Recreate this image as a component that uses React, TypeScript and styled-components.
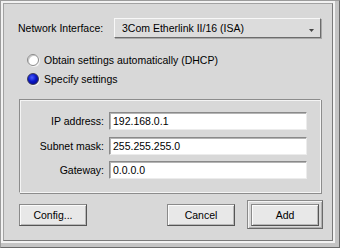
import { styled, createGlobalStyle } from "styled-components";

const Global = createGlobalStyle`
  html, body {
    margin: 0;
    padding: 0;
    background: #d8d8d8;
  }
  * {
    box-sizing: border-box;
  }
`;

const Window = styled.div`
  width: 340px;
  height: 248px;
  border: 1px solid;
  border-color: #9c9c9c #6a6a6a #6a6a6a #9c9c9c;
  background: #f2f2f2;
  padding: 2px 6px 6px 2px;
  box-shadow: inset -4px -4px 0 #c4c4c4, inset -5px -5px 0 #f2f2f2;
  font-family: "Liberation Sans", Arial, sans-serif;
  font-size: 10.5px;
  color: #000;
`;

const Panel = styled.div`
  width: 100%;
  height: 100%;
  border: 1px solid;
  border-color: #a2a2a2 #7a7a7a #7a7a7a #a2a2a2;
  background: #d8d8d8;
  padding: 14px 0 0 14px;
  display: flex;
  flex-direction: column;
`;

const InterfaceRow = styled.div`
  display: flex;
  align-items: center;
  height: 20px;
`;

const InterfaceLabel = styled.span`
  width: 96px;
`;

const Dropdown = styled.div`
  width: 207px;
  height: 20px;
  display: flex;
  align-items: center;
  justify-content: space-between;
  padding: 0 6px 0 7px;
  background: #dcdcdc;
  border: 1px solid;
  border-color: #f8f8f8 #6c6c6c #6c6c6c #f8f8f8;
  box-shadow: 1px 1px 0 #a8a8a8;
`;

const Arrow = styled.svg`
  width: 5px;
  height: 3px;
  margin-top: 4px;
`;

const Radios = styled.div`
  display: flex;
  flex-direction: column;
  margin: 12px 0 0 9px;
`;

const RadioRow = styled.label`
  display: flex;
  align-items: center;
  height: 19px;
  gap: 5px;
`;

const RadioDot = styled.span<{ $on?: boolean }>`
  width: 12px;
  height: 12px;
  border-radius: 50%;
  border: 1px solid ${(p) => (p.$on ? "#3a3a5a" : "#8a8a8a")};
  background: ${(p) =>
    p.$on
      ? "radial-gradient(circle at 40% 35%, #4a5cff 0%, #0a18c8 45%, #00007a 100%)"
      : "#ffffff"};
  box-shadow: ${(p) =>
    p.$on ? "1px 1px 0 #f4f4f4" : "inset 1px 1px 0 #c8c8c8, 1px 1px 0 #f4f4f4"};
`;

const GroupBox = styled.div`
  width: 302px;
  height: 94px;
  margin: 11px 0 0 1px;
  border: 1px solid;
  border-color: #8c8c8c #f4f4f4 #f4f4f4 #8c8c8c;
  box-shadow: inset 1px 1px 0 #f4f4f4, 1px 1px 0 #8c8c8c;
  padding: 12px 0 0 0;
  display: flex;
  flex-direction: column;
  gap: 6.5px;
`;

const FieldRow = styled.div`
  display: flex;
  align-items: center;
  gap: 5px;
  height: 18px;
`;

const FieldLabel = styled.span`
  width: 84px;
  text-align: right;
`;

const Field = styled.div`
  width: 198px;
  height: 18px;
  background: #fff;
  border: 1px solid;
  border-color: #8a8a8a #ececec #ececec #8a8a8a;
  box-shadow: inset 1px 1px 0 #b4b4b4;
  padding: 0 3px;
  display: flex;
  align-items: center;
`;

const ButtonRow = styled.div`
  display: flex;
  align-items: center;
  height: 29px;
  margin: 7px 0 0 1px;
`;

const Button = styled.div<{ $gap?: number }>`
  width: 68px;
  height: 22px;
  margin-left: ${(p) => p.$gap ?? 0}px;
  display: flex;
  align-items: center;
  justify-content: center;
  background: #e8e8e8;
  border: 1px solid;
  border-color: #8a8a8a #555 #555 #8a8a8a;
  box-shadow: inset 1px 1px 0 #fbfbfb, inset -1px -1px 0 #b8b8b8;
`;

const DefaultFrame = styled.div`
  margin-left: 12px;
  height: 29px;
  padding: 3px;
  border: 1px solid;
  border-color: #8a8a8a #6a6a6a #6a6a6a #8a8a8a;
  box-shadow: inset 1px 1px 0 #f4f4f4, inset -1px -1px 0 #b0b0b0;
  display: flex;
  align-items: center;
`;

const fields = [
  { label: "IP address:", value: "192.168.0.1" },
  { label: "Subnet mask:", value: "255.255.255.0" },
  { label: "Gateway:", value: "0.0.0.0" },
];

export default function App() {
  return (
    <>
      <Global />
      <Window>
        <Panel>
          <InterfaceRow>
            <InterfaceLabel>Network Interface:</InterfaceLabel>
            <Dropdown>
              <span>3Com Etherlink II/16 (ISA)</span>
              <Arrow viewBox="0 0 5 3">
                <path d="M0 0h5L2.5 3z" fill="#444" />
              </Arrow>
            </Dropdown>
          </InterfaceRow>
          <Radios>
            <RadioRow>
              <RadioDot />
              Obtain settings automatically (DHCP)
            </RadioRow>
            <RadioRow>
              <RadioDot $on />
              Specify settings
            </RadioRow>
          </Radios>
          <GroupBox>
            {fields.map((f) => (
              <FieldRow key={f.label}>
                <FieldLabel>{f.label}</FieldLabel>
                <Field>{f.value}</Field>
              </FieldRow>
            ))}
          </GroupBox>
          <ButtonRow>
            <Button>Config...</Button>
            <Button $gap={80}>Cancel</Button>
            <DefaultFrame>
              <Button>Add</Button>
            </DefaultFrame>
          </ButtonRow>
        </Panel>
      </Window>
    </>
  );
}
